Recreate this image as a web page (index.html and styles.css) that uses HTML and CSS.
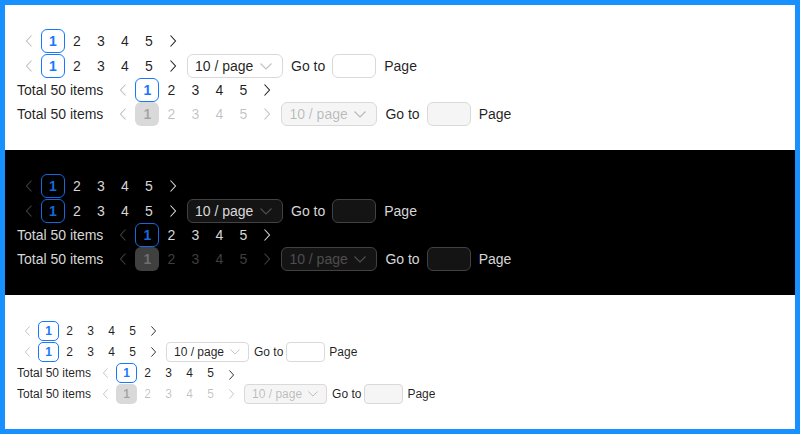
FILE: index.html
```html
<!DOCTYPE html>
<html>
<head>
<meta charset="utf-8">
<link rel="stylesheet" href="styles.css">
</head>
<body>
<div class="frame">
  <section class="sec light">
    <div class="row r1">
      <span class="nav dis"><svg viewBox="0 0 8 12"><polyline points="6.5,0.5 1.5,6 6.5,11.5"/></svg></span>
      <span class="item active">1</span><span class="item">2</span><span class="item">3</span><span class="item">4</span><span class="item">5</span>
      <span class="nav"><svg viewBox="0 0 8 12"><polyline points="1.5,0.5 6.5,6 1.5,11.5"/></svg></span>
    </div>
    <div class="row">
      <span class="nav dis"><svg viewBox="0 0 8 12"><polyline points="6.5,0.5 1.5,6 6.5,11.5"/></svg></span>
      <span class="item active">1</span><span class="item">2</span><span class="item">3</span><span class="item">4</span><span class="item">5</span>
      <span class="nav"><svg viewBox="0 0 8 12"><polyline points="1.5,0.5 6.5,6 1.5,11.5"/></svg></span>
      <span class="select">10 / page<svg class="caret" viewBox="0 0 12 7"><polyline points="0.5,0.5 6,6 11.5,0.5"/></svg></span>
      <span class="goto">Go to</span><span class="input"></span><span class="page">Page</span>
    </div>
    <div class="row">
      <span class="total">Total 50 items</span>
      <span class="nav dis"><svg viewBox="0 0 8 12"><polyline points="6.5,0.5 1.5,6 6.5,11.5"/></svg></span>
      <span class="item active">1</span><span class="item">2</span><span class="item">3</span><span class="item">4</span><span class="item">5</span>
      <span class="nav"><svg viewBox="0 0 8 12"><polyline points="1.5,0.5 6.5,6 1.5,11.5"/></svg></span>
    </div>
    <div class="row disabled">
      <span class="total">Total 50 items</span>
      <span class="nav"><svg viewBox="0 0 8 12"><polyline points="6.5,0.5 1.5,6 6.5,11.5"/></svg></span>
      <span class="item active">1</span><span class="item">2</span><span class="item">3</span><span class="item">4</span><span class="item">5</span>
      <span class="nav"><svg viewBox="0 0 8 12"><polyline points="1.5,0.5 6.5,6 1.5,11.5"/></svg></span>
      <span class="select">10 / page<svg class="caret" viewBox="0 0 12 7"><polyline points="0.5,0.5 6,6 11.5,0.5"/></svg></span>
      <span class="goto">Go to</span><span class="input"></span><span class="page">Page</span>
    </div>
  </section>

  <section class="sec dark">
    <div class="row r1">
      <span class="nav dis"><svg viewBox="0 0 8 12"><polyline points="6.5,0.5 1.5,6 6.5,11.5"/></svg></span>
      <span class="item active">1</span><span class="item">2</span><span class="item">3</span><span class="item">4</span><span class="item">5</span>
      <span class="nav"><svg viewBox="0 0 8 12"><polyline points="1.5,0.5 6.5,6 1.5,11.5"/></svg></span>
    </div>
    <div class="row">
      <span class="nav dis"><svg viewBox="0 0 8 12"><polyline points="6.5,0.5 1.5,6 6.5,11.5"/></svg></span>
      <span class="item active">1</span><span class="item">2</span><span class="item">3</span><span class="item">4</span><span class="item">5</span>
      <span class="nav"><svg viewBox="0 0 8 12"><polyline points="1.5,0.5 6.5,6 1.5,11.5"/></svg></span>
      <span class="select">10 / page<svg class="caret" viewBox="0 0 12 7"><polyline points="0.5,0.5 6,6 11.5,0.5"/></svg></span>
      <span class="goto">Go to</span><span class="input"></span><span class="page">Page</span>
    </div>
    <div class="row">
      <span class="total">Total 50 items</span>
      <span class="nav dis"><svg viewBox="0 0 8 12"><polyline points="6.5,0.5 1.5,6 6.5,11.5"/></svg></span>
      <span class="item active">1</span><span class="item">2</span><span class="item">3</span><span class="item">4</span><span class="item">5</span>
      <span class="nav"><svg viewBox="0 0 8 12"><polyline points="1.5,0.5 6.5,6 1.5,11.5"/></svg></span>
    </div>
    <div class="row disabled">
      <span class="total">Total 50 items</span>
      <span class="nav"><svg viewBox="0 0 8 12"><polyline points="6.5,0.5 1.5,6 6.5,11.5"/></svg></span>
      <span class="item active">1</span><span class="item">2</span><span class="item">3</span><span class="item">4</span><span class="item">5</span>
      <span class="nav"><svg viewBox="0 0 8 12"><polyline points="1.5,0.5 6.5,6 1.5,11.5"/></svg></span>
      <span class="select">10 / page<svg class="caret" viewBox="0 0 12 7"><polyline points="0.5,0.5 6,6 11.5,0.5"/></svg></span>
      <span class="goto">Go to</span><span class="input"></span><span class="page">Page</span>
    </div>
  </section>

  <section class="sec light small">
    <div class="row r1">
      <span class="nav dis"><svg viewBox="0 0 8 12"><polyline points="6.5,0.5 1.5,6 6.5,11.5"/></svg></span>
      <span class="item active">1</span><span class="item">2</span><span class="item">3</span><span class="item">4</span><span class="item">5</span>
      <span class="nav"><svg viewBox="0 0 8 12"><polyline points="1.5,0.5 6.5,6 1.5,11.5"/></svg></span>
    </div>
    <div class="row">
      <span class="nav dis"><svg viewBox="0 0 8 12"><polyline points="6.5,0.5 1.5,6 6.5,11.5"/></svg></span>
      <span class="item active">1</span><span class="item">2</span><span class="item">3</span><span class="item">4</span><span class="item">5</span>
      <span class="nav"><svg viewBox="0 0 8 12"><polyline points="1.5,0.5 6.5,6 1.5,11.5"/></svg></span>
      <span class="select">10 / page<svg class="caret" viewBox="0 0 12 7"><polyline points="0.5,0.5 6,6 11.5,0.5"/></svg></span>
      <span class="goto">Go to</span><span class="input"></span><span class="page">Page</span>
    </div>
    <div class="row r3">
      <span class="total">Total 50 items</span>
      <span class="nav dis"><svg viewBox="0 0 8 12"><polyline points="6.5,0.5 1.5,6 6.5,11.5"/></svg></span>
      <span class="item active">1</span><span class="item">2</span><span class="item">3</span><span class="item">4</span><span class="item">5</span>
      <span class="nav low"><svg viewBox="0 0 8 12"><polyline points="1.5,0.5 6.5,6 1.5,11.5"/></svg></span>
    </div>
    <div class="row disabled">
      <span class="total">Total 50 items</span>
      <span class="nav"><svg viewBox="0 0 8 12"><polyline points="6.5,0.5 1.5,6 6.5,11.5"/></svg></span>
      <span class="item active">1</span><span class="item">2</span><span class="item">3</span><span class="item">4</span><span class="item">5</span>
      <span class="nav"><svg viewBox="0 0 8 12"><polyline points="1.5,0.5 6.5,6 1.5,11.5"/></svg></span>
      <span class="select">10 / page<svg class="caret" viewBox="0 0 12 7"><polyline points="0.5,0.5 6,6 11.5,0.5"/></svg></span>
      <span class="goto">Go to</span><span class="input"></span><span class="page">Page</span>
    </div>
  </section>
</div>
</body>
</html>
```

FILE: styles.css
```css
* { box-sizing: border-box; }
html, body { margin: 0; padding: 0; }
body {
  width: 800px;
  height: 434px;
  overflow: hidden;
  font-family: "Liberation Sans", Arial, sans-serif;
  font-size: 14px;
}
.frame {
  width: 800px;
  height: 434px;
  border: 5px solid #1890ff;
  background: #fff;
}
.sec {
  height: 145px;
  padding: 24px 12px;
  display: flex;
  flex-direction: column;
  --text: rgba(0, 0, 0, 0.88);
  --muted: rgba(0, 0, 0, 0.25);
  --blue: #1677ff;
  --border: #d9d9d9;
  --field: #ffffff;
  --dis-bg: rgba(0, 0, 0, 0.04);
  --dis-active: rgba(0, 0, 0, 0.15);
  color: var(--text);
}
.light { background: #fff; }
.dark {
  background: #000;
  --text: rgba(255, 255, 255, 0.85);
  --muted: rgba(255, 255, 255, 0.25);
  --blue: #1668dc;
  --border: #424242;
  --field: #141414;
  --dis-bg: rgba(255, 255, 255, 0.08);
  --dis-active: rgba(255, 255, 255, 0.25);
}
.row {
  display: flex;
  align-items: center;
  height: 24px;
}
.row.r1 { margin-bottom: 1px; }
.item, .nav {
  width: 24px;
  height: 24px;
  display: flex;
  align-items: center;
  justify-content: center;
  line-height: 22px;
  border: 1px solid transparent;
  border-radius: 6px;
}
.item.active {
  border-color: var(--blue);
  color: var(--blue);
  font-weight: 700;
}
.nav svg { width: 8px; height: 12px; }
.nav polyline, .caret polyline {
  fill: none;
  stroke: var(--text);
  stroke-width: 1.1;
}
.nav.dis polyline { stroke: var(--muted); }
.total { margin-right: 8px; }
.select {
  margin-left: 2px;
  width: 96px;
  height: 24px;
  border: 1px solid var(--border);
  border-radius: 6px;
  background: var(--field);
  display: flex;
  align-items: center;
  padding: 0 10px 0 7px;
  justify-content: space-between;
}
.caret { width: 12px; height: 7px; }
.caret polyline { stroke: var(--muted); }
.goto { margin-left: 8px; }
.input {
  margin-left: 7px;
  width: 44px;
  height: 24px;
  border: 1px solid var(--border);
  border-radius: 6px;
  background: var(--field);
}
.page { margin-left: 8px; }

.disabled .item, .disabled .nav polyline { color: var(--muted); stroke: var(--muted); }
.disabled .item.active {
  border-color: transparent;
  background: var(--dis-active);
  color: var(--muted);
}
.disabled .select {
  background: var(--dis-bg);
  color: var(--muted);
}
.disabled .input { background: var(--dis-bg); }

/* small size */
.small {
  height: 134px;
  font-size: 12px;
  padding-top: 25px;
}
.small .row { height: 21px; }
.small .row.r1 { margin-bottom: 0; height: 21px; }
.small .item, .small .nav {
  width: 21px;
  height: 20px;
  line-height: 18px;
  border-radius: 5px;
}
.small .nav svg { width: 7px; height: 10px; }
.small .nav.low { padding-top: 5px; }
.small .total { margin-right: 4px; }
.small .select {
  width: 83px;
  height: 20px;
  padding: 0 8px 0 7px;
  border-radius: 4px;
}
.small .caret { width: 10px; height: 6px; }
.small .goto { margin-left: 5px; }
.small .input { width: 39px; height: 20px; margin-left: 3px; border-radius: 4px; }
.small .page { margin-left: 4px; }
.small .disabled .select { width: 83px; }
.small .disabled .goto { margin-left: 5px; }
```
